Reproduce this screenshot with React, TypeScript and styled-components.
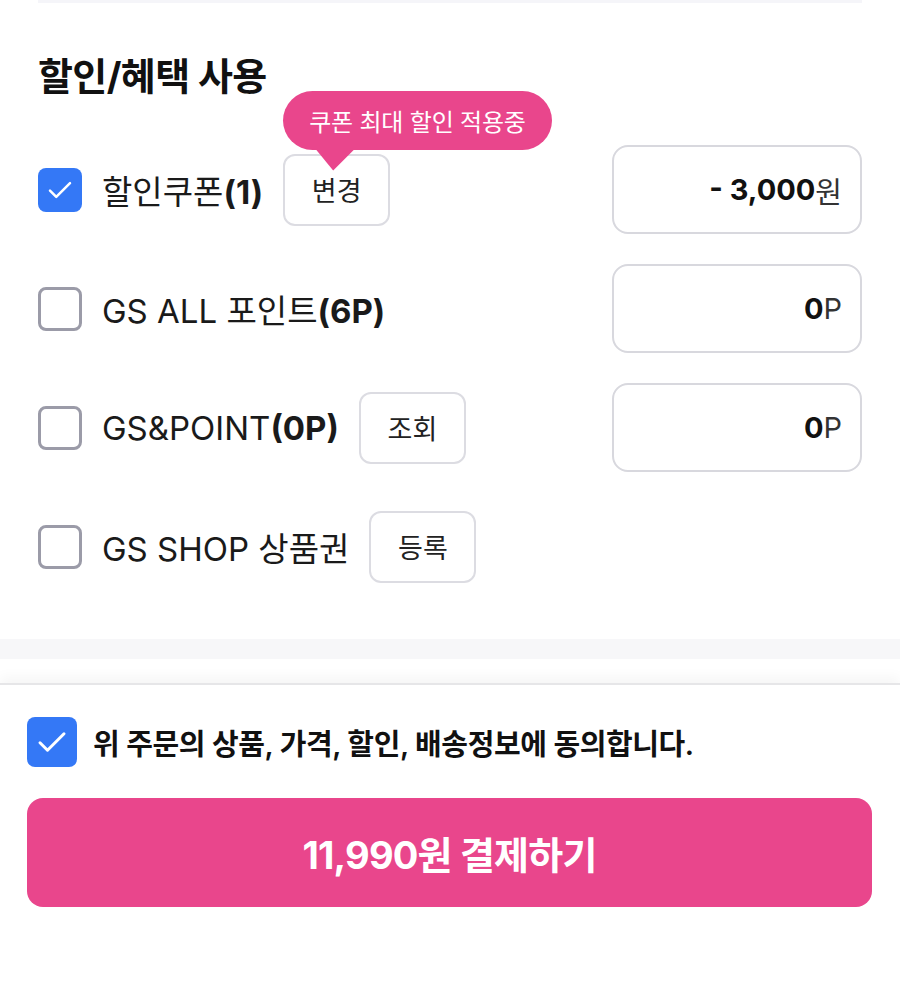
import React from 'react';
import styled, { createGlobalStyle } from 'styled-components';

const GlobalStyle = createGlobalStyle`
    html, body {
        margin: 0;
        padding: 0;
        background: #fff;
    }
    body {
        font-family: 'Inter', 'Noto Sans CJK KR', sans-serif;
        color: #111;
    }
`;

const Page = styled.div`
    width: 900px;
    height: 1004px;
    overflow: hidden;
    display: flex;
    flex-direction: column;
    background: #fff;
`;

const Section = styled.section`
    padding: 0 38px 48px;
`;

const TopLine = styled.div`
    height: 3px;
    background: #f5f5f9;
`;

const Title = styled.h2`
    margin: 48px 0 0;
    font-size: 38px;
    line-height: 50px;
    font-weight: 700;
    letter-spacing: -0.6px;
    color: #111;
`;

const Rows = styled.div`
    margin-top: 44px;
    display: flex;
    flex-direction: column;
    gap: 30px;
`;

const Row = styled.div`
    display: flex;
    align-items: center;
    min-height: 89px;
`;

const Check = styled.span<{ $checked?: boolean; $size?: number }>`
    flex: 0 0 auto;
    box-sizing: border-box;
    width: ${(p) => p.$size || 44}px;
    height: ${(p) => p.$size || 44}px;
    border-radius: 8px;
    display: flex;
    align-items: center;
    justify-content: center;
    background: ${(p) => (p.$checked ? '#3478f6' : '#fff')};
    border: ${(p) => (p.$checked ? 'none' : '3px solid #9b9ba8')};
`;

const Label = styled.span`
    margin-left: 20px;
    font-size: 33px;
    letter-spacing: 0;
    color: #1a1a1a;
    white-space: nowrap;
    b {
        font-weight: 700;
    }
`;

const SmallButton = styled.button`
    position: relative;
    box-sizing: border-box;
    margin-left: 20px;
    width: 107px;
    height: 72px;
    border: 2px solid #dcdce2;
    border-radius: 12px;
    background: #fff;
    font-family: inherit;
    font-size: 27px;
    color: #222;
    padding: 0;
`;

const Tooltip = styled.div`
    position: absolute;
    left: -2px;
    bottom: calc(100% + 6px);
    height: 59px;
    padding: 0 26px;
    border-radius: 30px;
    background: #e9468c;
    color: #fff;
    font-size: 24px;
    letter-spacing: -0.2px;
    white-space: nowrap;
    display: flex;
    align-items: center;
    &::after {
        content: '';
        position: absolute;
        top: calc(100% - 1px);
        left: 32px;
        width: 40px;
        height: 22px;
        background: #e9468c;
        clip-path: polygon(0 0, 100% 0, 45% 100%);
    }
`;

const AmountBox = styled.div`
    margin-left: auto;
    box-sizing: border-box;
    width: 250px;
    height: 89px;
    border: 2px solid #d8d8de;
    border-radius: 16px;
    display: flex;
    align-items: center;
    justify-content: flex-end;
    padding-right: 18px;
    font-size: 29px;
    color: #333;
    b {
        font-weight: 700;
        color: #111;
    }
`;

const Band = styled.div`
    height: 20px;
    background: #f7f7f9;
`;

const Gap = styled.div`
    height: 24px;
`;

const BottomBar = styled.div`
    flex: 1;
    border-top: 2px solid #e6e6e8;
    box-shadow: 0 -6px 12px rgba(0, 0, 0, 0.04);
    padding: 32px 28px 0 27px;
    background: #fff;
`;

const Agree = styled.div`
    display: flex;
    align-items: center;
    gap: 16px;
    font-size: 29px;
    font-weight: 600;
    letter-spacing: -0.4px;
    color: #111;
`;

const PayButton = styled.button`
    margin-top: 31px;
    width: 100%;
    height: 109px;
    border: none;
    border-radius: 16px;
    background: #e9468c;
    color: #fff;
    font-family: inherit;
    font-size: 38px;
    font-weight: 700;
    letter-spacing: -0.8px;
`;

const CheckMark = ({ size = 30 }: { size?: number }) => (
    <svg width={size} height={size} viewBox="0 0 24 24" fill="none">
        <path d="M4 12.5l5 5L20 6.5" stroke="#fff" strokeWidth="2" strokeLinecap="round" strokeLinejoin="round" />
    </svg>
);

function App() {
    return (
        <Page>
            <GlobalStyle />
            <Section>
                <TopLine />
                <Title>할인/혜택 사용</Title>
                <Rows>
                    <Row>
                        <Check $checked>
                            <CheckMark />
                        </Check>
                        <Label>
                            할인쿠폰<b>(1)</b>
                        </Label>
                        <SmallButton>
                            <Tooltip>쿠폰 최대 할인 적용중</Tooltip>
                            변경
                        </SmallButton>
                        <AmountBox>
                            <b>- 3,000</b>원
                        </AmountBox>
                    </Row>
                    <Row>
                        <Check />
                        <Label>
                            GS ALL 포인트<b>(6P)</b>
                        </Label>
                        <AmountBox>
                            <b>0</b>P
                        </AmountBox>
                    </Row>
                    <Row>
                        <Check />
                        <Label>
                            GS&amp;POINT<b>(0P)</b>
                        </Label>
                        <SmallButton>조회</SmallButton>
                        <AmountBox>
                            <b>0</b>P
                        </AmountBox>
                    </Row>
                    <Row>
                        <Check />
                        <Label>GS SHOP 상품권</Label>
                        <SmallButton>등록</SmallButton>
                    </Row>
                </Rows>
            </Section>
            <Band />
            <Gap />
            <BottomBar>
                <Agree>
                    <Check $checked $size={50}>
                        <CheckMark size={36} />
                    </Check>
                    위 주문의 상품, 가격, 할인, 배송정보에 동의합니다.
                </Agree>
                <PayButton>11,990원 결제하기</PayButton>
            </BottomBar>
        </Page>
    );
}

export default App;
